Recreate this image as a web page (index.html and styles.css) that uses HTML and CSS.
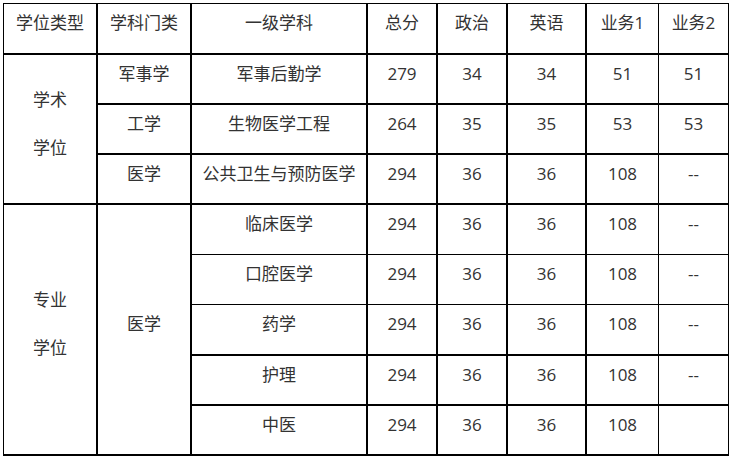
FILE: index.html
```html
<!DOCTYPE html>
<html lang="zh-CN">
<head>
<meta charset="utf-8">
<title>分数线</title>
<link rel="stylesheet" href="styles.css">
</head>
<body>
<table class="score-table">
  <thead>
    <tr class="row-head">
      <th class="c1">学位类型</th>
      <th class="c2">学科门类</th>
      <th class="c3">一级学科</th>
      <th class="c4">总分</th>
      <th class="c5">政治</th>
      <th class="c6">英语</th>
      <th class="c7 thin-r">业务1</th>
      <th class="c8 thin-r">业务2</th>
    </tr>
  </thead>
  <tbody>
    <tr class="row-48">
      <td rowspan="3">学术<br><br>学位</td>
      <td>军事学</td>
      <td>军事后勤学</td>
      <td>279</td>
      <td>34</td>
      <td>34</td>
      <td class="thin-r">51</td>
      <td class="thin-r">51</td>
    </tr>
    <tr class="row-48">
      <td>工学</td>
      <td>生物医学工程</td>
      <td>264</td>
      <td>35</td>
      <td>35</td>
      <td class="thin-r">53</td>
      <td class="thin-r">53</td>
    </tr>
    <tr class="row-48">
      <td>医学</td>
      <td>公共卫生与预防医学</td>
      <td>294</td>
      <td>36</td>
      <td>36</td>
      <td class="thin-r">108</td>
      <td class="thin-r">--</td>
    </tr>
    <tr class="row-thin">
      <td rowspan="5">专业<br><br>学位</td>
      <td rowspan="5">医学</td>
      <td class="thin-b">临床医学</td>
      <td class="thin-b">294</td>
      <td class="thin-b">36</td>
      <td class="thin-b">36</td>
      <td class="thin-b thin-r">108</td>
      <td class="thin-b thin-r">--</td>
    </tr>
    <tr class="row-thin">
      <td class="thin-b">口腔医学</td>
      <td class="thin-b">294</td>
      <td class="thin-b">36</td>
      <td class="thin-b">36</td>
      <td class="thin-b thin-r">108</td>
      <td class="thin-b thin-r">--</td>
    </tr>
    <tr class="row-51">
      <td>药学</td>
      <td>294</td>
      <td>36</td>
      <td>36</td>
      <td class="thin-r">108</td>
      <td class="thin-r">--</td>
    </tr>
    <tr class="row-48">
      <td>护理</td>
      <td>294</td>
      <td>36</td>
      <td>36</td>
      <td class="thin-r">108</td>
      <td class="thin-r">--</td>
    </tr>
    <tr class="row-48">
      <td>中医</td>
      <td>294</td>
      <td>36</td>
      <td>36</td>
      <td class="thin-r">108</td>
      <td class="thin-r"></td>
    </tr>
  </tbody>
</table>
</body>
</html>
```

FILE: styles.css
```css
html, body {
  margin: 0;
  padding: 0;
  background: #ffffff;
}

.score-table {
  margin: 3px 0 0 3px;
  border-collapse: separate;
  border-spacing: 0;
  table-layout: fixed;
  width: 726px;
  border-top: 1px solid #000;
  border-left: 1px solid #000;
  font-family: "Open Sans", "Noto Sans CJK SC", sans-serif;
  font-size: 17px;
  line-height: 24px;
  color: #333333;
}

.score-table th,
.score-table td {
  box-sizing: border-box;
  border-right: 2px solid #000;
  border-bottom: 2px solid #000;
  padding: 0 0 11px 0;
  text-align: center;
  vertical-align: middle;
  font-weight: normal;
  white-space: nowrap;
}

.score-table .thin-r {
  border-right-width: 1px;
}

.score-table .thin-b {
  border-bottom-width: 1px;
}

.c1 { width: 94px; }
.c2 { width: 94px; }
.c3 { width: 176px; }
.c4 { width: 70px; }
.c5 { width: 70px; }
.c6 { width: 79px; }
.c7 { width: 72px; }
.c8 { width: 70px; }

.row-head { height: 51px; }
.row-48 { height: 50px; }
.row-thin { height: 50px; }
.row-51 { height: 51px; }
```
